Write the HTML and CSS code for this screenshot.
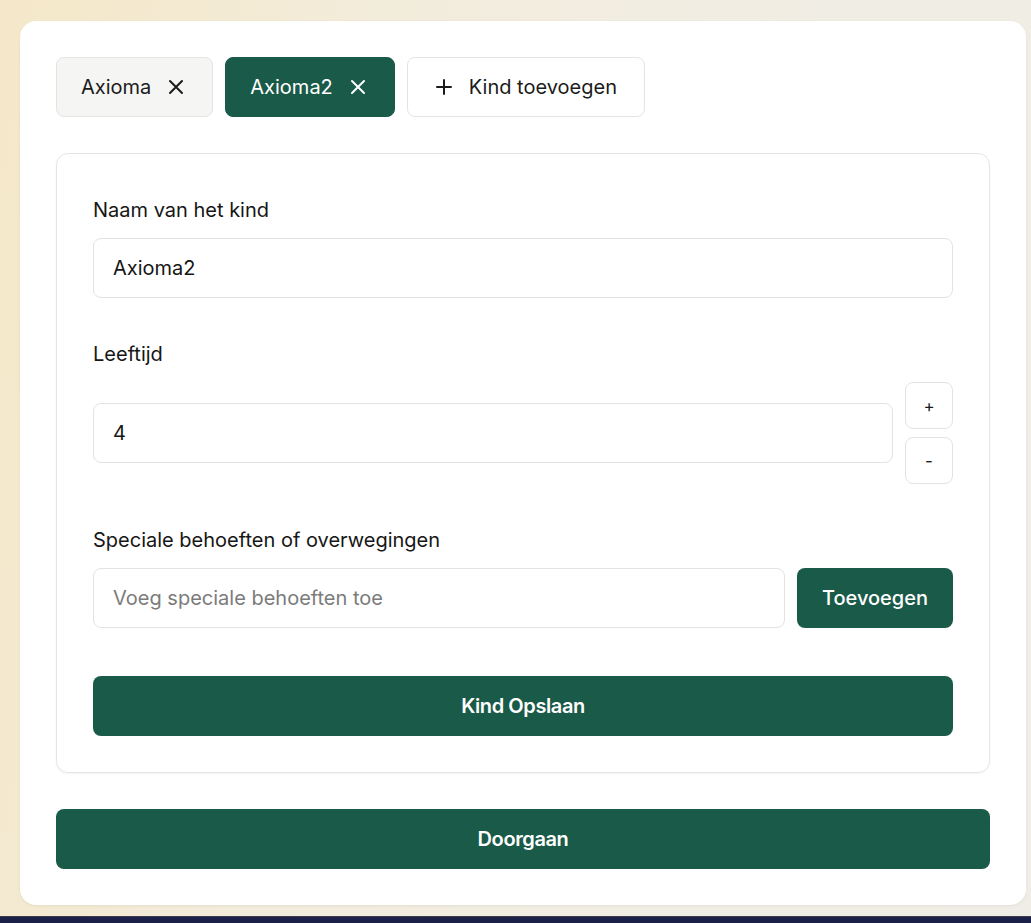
FILE: index.html
```html
<!DOCTYPE html>
<html lang="nl">
<head>
<meta charset="utf-8">
<title>Kinderen</title>
<link rel="stylesheet" href="styles.css">
</head>
<body>
<div class="page">
  <main class="card">
    <div class="tabs">
      <button class="tab">
        <span>Axioma</span>
        <svg class="ico" viewBox="0 0 24 24"><path d="M18 6L6 18M6 6l12 12"/></svg>
      </button>
      <button class="tab tab-active">
        <span>Axioma2</span>
        <svg class="ico" viewBox="0 0 24 24"><path d="M18 6L6 18M6 6l12 12"/></svg>
      </button>
      <button class="tab tab-add">
        <svg class="ico" viewBox="0 0 24 24"><path d="M12 5v14M5 12h14"/></svg>
        <span>Kind toevoegen</span>
      </button>
    </div>

    <section class="panel">
      <div class="group">
        <label class="label">Naam van het kind</label>
        <div class="input">Axioma2</div>
      </div>
      <div class="group">
        <label class="label">Leeftijd</label>
        <div class="row row-center">
          <div class="input grow">4</div>
          <div class="stepper">
            <button class="step">+</button>
            <button class="step">-</button>
          </div>
        </div>
      </div>
      <div class="group">
        <label class="label">Speciale behoeften of overwegingen</label>
        <div class="row">
          <div class="input grow placeholder">Voeg speciale behoeften toe</div>
          <button class="btn btn-small">Toevoegen</button>
        </div>
      </div>
      <button class="btn btn-wide save">Kind Opslaan</button>
    </section>

    <button class="btn btn-wide">Doorgaan</button>
  </main>
</div>
<div class="taskbar"></div>
</body>
</html>
```

FILE: styles.css
```css
* { box-sizing: border-box; }
html, body { margin: 0; padding: 0; }
body {
  width: 1031px;
  height: 923px;
  overflow: hidden;
  font-family: "Inter", "Noto Sans", sans-serif;
  color: #141414;
  background: linear-gradient(100deg, #f5e8c9 0%, #f2ecdc 35%, #f0ede4 70%, #efede5 100%);
}
.page {
  height: 916px;
  padding: 21px 5px 0 20px;
}
.card {
  background: #fff;
  border-radius: 16px;
  height: 884px;
  padding: 36px;
  display: flex;
  flex-direction: column;
  gap: 36px;
  box-shadow: 0 1px 3px rgba(0,0,0,0.06);
}
button {
  font-family: inherit;
  cursor: pointer;
}
.tabs {
  display: flex;
  gap: 12px;
}
.tab {
  height: 60px;
  display: flex;
  align-items: center;
  gap: 13px;
  padding: 0 24px;
  border: 1px solid #e4e4e4;
  border-radius: 8px;
  background: #f5f5f4;
  color: #1b1b1b;
  font-size: 20px;
  font-weight: 400;
}
.tab .ico {
  width: 24px;
  height: 24px;
  flex: none;
  fill: none;
  stroke: currentColor;
  stroke-width: 2;
  stroke-linecap: round;
}
.tab-active {
  background: #1a5a48;
  border-color: #1a5a48;
  color: #fff;
}
.tab-add {
  background: #fff;
  padding-right: 27px;
}
.panel {
  border: 1px solid #e5e5e5;
  border-radius: 12px;
  padding: 36px;
  display: flex;
  flex-direction: column;
  gap: 36px;
  box-shadow: 0 1px 2px rgba(0,0,0,0.05);
}
.group {
  display: flex;
  flex-direction: column;
  gap: 8px;
}
.label {
  line-height: 40px;
  font-size: 20px;
  font-weight: 400;
  color: #161616;
}
.input {
  height: 60px;
  border: 1px solid #e3e3e3;
  border-radius: 8px;
  padding: 0 19px;
  display: flex;
  align-items: center;
  font-size: 20px;
  color: #161616;
}
.placeholder { color: #7b7b7b; }
.row {
  display: flex;
  gap: 12px;
}
.row-center { align-items: center; }
.grow { flex: 1; }
.stepper {
  display: flex;
  flex-direction: column;
  gap: 8px;
}
.step {
  width: 48px;
  height: 47px;
  border: 1px solid #e3e3e3;
  border-radius: 8px;
  background: #fff;
  font-size: 17px;
  color: #1a1a1a;
  padding: 0;
}
.btn {
  height: 60px;
  border: none;
  border-radius: 8px;
  background: #1a5a48;
  color: #fff;
  font-size: 20px;
  font-weight: 600;
  letter-spacing: -0.4px;
}
.btn-small {
  width: 156px;
  font-weight: 500;
  letter-spacing: 0;
}
.btn-wide { width: 100%; }
.save { margin-top: 12px; }
.taskbar {
  height: 7px;
  background: #1b2049;
  border-top: 1px solid #3b3d4e;
}
```
